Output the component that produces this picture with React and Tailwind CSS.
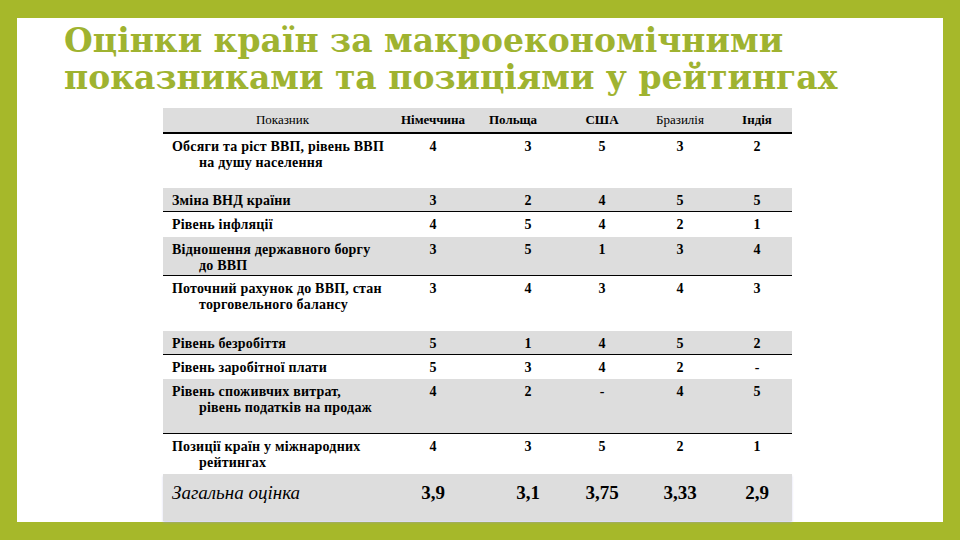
import React from "react";

const rows = [
  { label: ["Обсяги та ріст ВВП, рівень ВВП", "на душу населення"], v: ["4", "3", "5", "3", "2"], h: "h-[54px]", gray: false },
  { label: ["Зміна ВНД країни"], v: ["3", "2", "4", "5", "5"], h: "h-[24px]", gray: true },
  { label: ["Рівень інфляції"], v: ["4", "5", "4", "2", "1"], h: "h-[25px]", gray: false },
  { label: ["Відношення державного боргу", "до ВВП"], v: ["3", "5", "1", "3", "4"], h: "h-[39px]", gray: true },
  { label: ["Поточний рахунок до ВВП, стан", "торговельного балансу"], v: ["3", "4", "3", "4", "3"], h: "h-[55px]", gray: false },
  { label: ["Рівень безробіття"], v: ["5", "1", "4", "5", "2"], h: "h-[24px]", gray: true },
  { label: ["Рівень заробітної плати"], v: ["5", "3", "4", "2", "-"], h: "h-[24px]", gray: false },
  { label: ["Рівень споживчих витрат,", "рівень податків на продаж"], v: ["4", "2", "-", "4", "5"], h: "h-[55px]", gray: true },
  { label: ["Позиції країн у міжнародних", "рейтингах"], v: ["4", "3", "5", "2", "1"], h: "h-[40px]", gray: false },
];

const cols = "grid grid-cols-[229px_82px_92px_72px_84px_70px]";

function Row({ row }) {
  return (
    <div
      className={`${cols} ${row.h} ${row.gray ? "bg-[#dddddd] border-b border-black" : "bg-white"} text-black`}
    >
      <div className="pl-[9px] pt-[5px] font-['Liberation_Serif'] text-[14px] font-bold leading-[16px] tracking-[0.2px]">
        <div>{row.label[0]}</div>
        {row.label[1] && <div className="pl-[27px]">{row.label[1]}</div>}
      </div>
      {row.v.map((n, i) => (
        <div key={i} className={`pt-[5px] text-center font-['Liberation_Serif'] text-[14px] font-bold leading-[16px] ${i === 1 ? "pl-[16px]" : ""}`}>
          {n}
        </div>
      ))}
    </div>
  );
}

export default function App() {
  return (
    <div className="w-[960px] h-[540px] bg-[#a6b82a] px-[17px] pt-[18px] pb-[18px]">
      <div className="w-full h-full bg-white flex flex-col">
        <h1 className="pl-[47px] pt-[4px] font-['DejaVu_Serif'] text-[33px] leading-[37px] font-bold text-[#9fb330]">
          Оцінки країн за макроекономічними
          <br />
          показниками та позиціями у рейтингах
        </h1>
        <div className="ml-[146px] mt-[12px] w-[629px] flex flex-col">
          <div className={`${cols} h-[26px] bg-[#dddddd] border-b-2 border-black items-center text-black`}>
            <div className="text-center pl-[10px] font-['Liberation_Serif'] text-[13px]">Показник</div>
            <div className="text-center font-['Liberation_Serif'] text-[13px] font-bold">Німеччина</div>
            <div className="text-center font-['Liberation_Serif'] text-[13px] font-bold pr-[14px]">Польща</div>
            <div className="text-center font-['Liberation_Serif'] text-[13px] font-bold">США</div>
            <div className="text-center font-['Liberation_Serif'] text-[13px]">Бразилія</div>
            <div className="text-center font-['Liberation_Serif'] text-[13px] font-bold">Індія</div>
          </div>
          {rows.map((r, i) => (
            <Row key={i} row={r} />
          ))}
          <div className={`${cols} h-[47px] bg-[#dddddd] text-black shadow-[0_2px_2px_rgba(150,150,220,0.35)]`}>
            <div className="pl-[9px] pt-[5px] font-['Liberation_Serif'] text-[19px] italic">Загальна оцінка</div>
            {["3,9", "3,1", "3,75", "3,33", "2,9"].map((n, i) => (
              <div key={i} className={`pt-[5px] text-center font-['Liberation_Serif'] text-[19px] font-bold ${i === 1 ? "pl-[16px]" : ""}`}>
                {n}
              </div>
            ))}
          </div>
        </div>
      </div>
    </div>
  );
}
